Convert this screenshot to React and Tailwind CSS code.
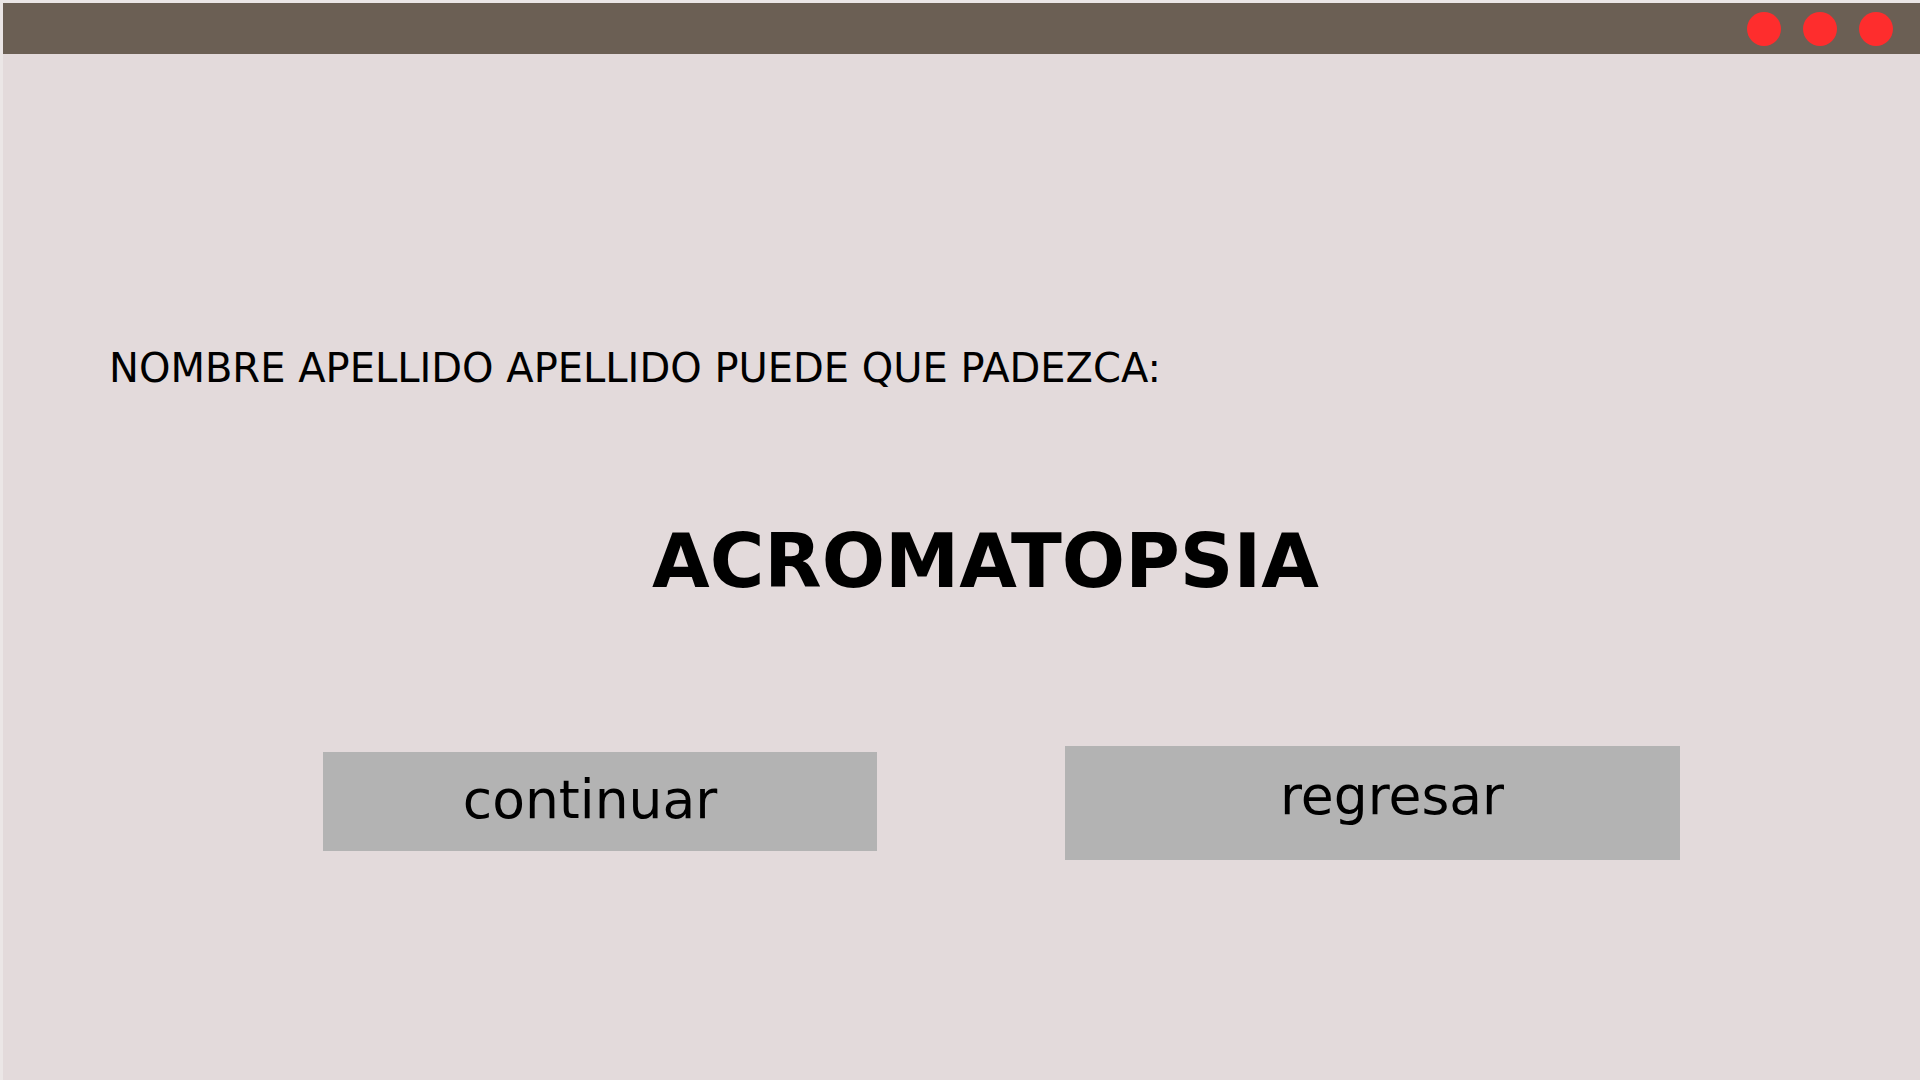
export default function App() {
  return (
    <div
      className="w-[1920px] h-[1080px] bg-[#ebe6e6] pt-[3px] pl-[3px] overflow-hidden"
      style={{ fontFamily: '"DejaVu Sans", "Liberation Sans", sans-serif' }}
    >
      <div className="w-full h-full flex flex-col bg-[#e3dadb]">
        <div className="h-[51px] shrink-0 bg-[#6b5f54] flex items-center justify-end gap-[22px] pr-[27px]">
          <div className="w-[34px] h-[34px] rounded-full bg-[#fe2d2d]" />
          <div className="w-[34px] h-[34px] rounded-full bg-[#fe2d2d]" />
          <div className="w-[34px] h-[34px] rounded-full bg-[#fe2d2d]" />
        </div>
        <div className="flex flex-col">
          <div className="mt-[294px] pl-[106px] text-[40px] leading-none text-black whitespace-nowrap">
            NOMBRE APELLIDO APELLIDO PUEDE QUE PADEZCA:
          </div>
          <div className="mt-[137px] pl-[649px] text-[74.5px] leading-none font-bold text-black whitespace-nowrap">
            ACROMATOPSIA
          </div>
          <div className="mt-[146px] pl-[320px] flex items-start gap-[188px]">
            <div className="mt-[6px] w-[554px] h-[99px] bg-[#b3b3b3] flex items-center justify-center pr-[20px] pb-[3px] text-[53.5px] leading-none text-black">
              continuar
            </div>
            <div className="w-[615px] h-[114px] bg-[#b3b3b3] flex items-center justify-center pl-[39px] pb-[14px] text-[53.5px] leading-none text-black">
              regresar
            </div>
          </div>
        </div>
      </div>
    </div>
  );
}
